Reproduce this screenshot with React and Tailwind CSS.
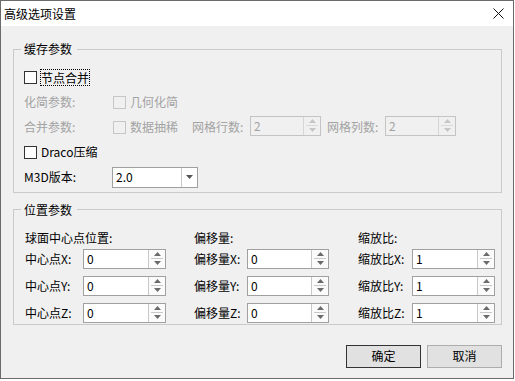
import React from 'react';

function Arrow({ up, color }) {
  return (
    <svg width="7" height="4" viewBox="0 0 7 4">
      <path d={up ? 'M0 4 L3.5 0 L7 4 Z' : 'M0 0 L3.5 4 L7 0 Z'} fill={color} />
    </svg>
  );
}

function SpinBox({ value, width, disabled }) {
  const arrow = disabled ? '#c6c6c6' : '#6a6a6a';
  return (
    <div
      className={`flex h-[20px] border ${
        disabled ? 'border-[#c4c4c4] bg-[#f0f0f0] text-[#a3a3a3]' : 'border-[#a0a0a0] bg-white text-black'
      }`}
      style={{ width }}
    >
      <div className="flex flex-1 items-center pl-[3px]">{value}</div>
      <div
        className={`flex w-[17px] flex-col border-l ${
          disabled ? 'border-[#d6d6d6]' : 'border-[#c8c8c8] bg-[#fbfbfb]'
        }`}
      >
        <div className="flex flex-1 items-center justify-center">
          <Arrow up color={arrow} />
        </div>
        <div className={`mx-[2px] h-px ${disabled ? 'bg-[#dadada]' : 'bg-[#c8c8c8]'}`} />
        <div className="flex flex-1 items-center justify-center">
          <Arrow color={arrow} />
        </div>
      </div>
    </div>
  );
}

function CheckBox({ disabled }) {
  return (
    <div
      className={`h-[13px] w-[13px] shrink-0 border ${
        disabled ? 'border-[#c6c6c6] bg-[#f0f0f0]' : 'border-[#333333] bg-white'
      }`}
    />
  );
}

function GroupBox({ title, className, children }) {
  return (
    <fieldset className={`border border-[#cacaca] ${className}`}>
      <legend className="ml-[7px] pl-[3px] pr-[5px] leading-[16px]">{title}</legend>
      {children}
    </fieldset>
  );
}

const columns = [
  { head: '球面中心点位置:', label: '中心点', labelW: 'w-[58px]', colW: 'w-[169px]', boxW: 83, value: '0' },
  { head: '偏移量:', label: '偏移量', labelW: 'w-[53px]', colW: 'w-[164px]', boxW: 82, value: '0' },
  { head: '缩放比:', label: '缩放比', labelW: 'w-[54px]', colW: 'w-[137px]', boxW: 83, value: '1' },
];

export default function App() {
  return (
    <div className="h-[381px] w-[515px] bg-white font-['Noto_Sans_CJK_SC','Liberation_Sans',sans-serif] text-[12px] leading-[16px] text-black">
      <div className="flex h-[379px] w-[514px] flex-col border border-[#6b6b6b] bg-[#f0f0f0]">
        {/* Title bar */}
        <div className="flex h-[25px] shrink-0 items-center justify-between bg-white pl-[3px]">
          <span>高级选项设置</span>
          <svg className="mr-[9px]" width="11" height="11" viewBox="0 0 11 11">
            <path d="M0.5 0.5 L10.5 10.5 M10.5 0.5 L0.5 10.5" stroke="#111" strokeWidth="1" fill="none" />
          </svg>
        </div>

        <div className="flex flex-col pl-[12px] pr-[11px]">
          <GroupBox title="缓存参数" className="mt-[15px] pb-[2px]">
            <div className="flex flex-col pl-[10px] pt-[7.5px]">
              <div className="flex h-[25px] items-center">
                <CheckBox />
                <span className="ml-[3px] border border-dotted border-black leading-[15px]">节点合并</span>
              </div>
              <div className="flex h-[25px] items-center text-[#a3a3a3]">
                <span className="w-[89px]">化简参数:</span>
                <CheckBox disabled />
                <span className="ml-[4px]">几何化简</span>
              </div>
              <div className="flex h-[25px] items-center text-[#a3a3a3]">
                <span className="w-[89px]">合并参数:</span>
                <CheckBox disabled />
                <span className="ml-[4px] w-[62px]">数据抽稀</span>
                <span className="w-[58px]">网格行数:</span>
                <div className="-mt-[3px]">
                  <SpinBox value="2" width={71} disabled />
                </div>
                <span className="ml-[6px] w-[58px]">网格列数:</span>
                <div className="-mt-[3px]">
                  <SpinBox value="2" width={71} disabled />
                </div>
              </div>
              <div className="flex h-[25px] items-center">
                <CheckBox />
                <span className="ml-[4px]">Draco压缩</span>
              </div>
              <div className="flex h-[25px] items-center">
                <span className="w-[88px]">M3D版本:</span>
                <div className="flex h-[21px] w-[86px] border border-[#a0a0a0] bg-white">
                  <div className="flex flex-1 items-center pl-[3px]">2.0</div>
                  <div className="flex w-[16px] items-center justify-center border-l border-[#c8c8c8]">
                    <Arrow color="#555" />
                  </div>
                </div>
              </div>
            </div>
          </GroupBox>

          <GroupBox title="位置参数" className="mt-[9px] pb-[1px]">
            <div className="flex pl-[11px] pt-[12px]">
              {columns.map((col) => (
                <div key={col.label} className={`flex flex-col ${col.colW}`}>
                  <div className="mb-[3px] h-[16px]">{col.head}</div>
                  <div className="flex flex-col gap-[7px]">
                    {['X', 'Y', 'Z'].map((axis) => (
                      <div key={axis} className="flex h-[20px] items-center">
                        <span className={col.labelW}>
                          {col.label}
                          {axis}:
                        </span>
                        <SpinBox value={col.value} width={col.boxW} />
                      </div>
                    ))}
                  </div>
                </div>
              ))}
            </div>
          </GroupBox>

          <div className="mt-[20px] flex justify-end gap-[6px]">
            <button className="h-[23px] w-[75px] border border-[#333333] bg-[#e1e1e1] leading-[16px]">确定</button>
            <button className="h-[23px] w-[75px] border border-[#adadad] bg-[#e1e1e1] leading-[16px]">取消</button>
          </div>
        </div>
      </div>
    </div>
  );
}
